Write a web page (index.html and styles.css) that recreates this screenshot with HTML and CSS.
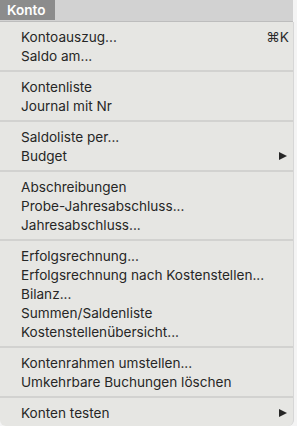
FILE: index.html
```html
<!DOCTYPE html>
<html lang="de">
<head>
    <meta charset="UTF-8">
    <meta name="viewport" content="width=device-width, initial-scale=1.0">
    <title>Konto</title>
    <link rel="stylesheet" href="styles.css">
</head>
<body>
    <div class="menubar">
        <div class="menu-title">Konto</div>
    </div>

    <div class="menu">
        <div class="item"><span>Kontoauszug...</span><span class="shortcut">&#8984;K</span></div>
        <div class="item">Saldo am...</div>
        <div class="separator"></div>

        <div class="item">Kontenliste</div>
        <div class="item">Journal mit Nr</div>
        <div class="separator"></div>

        <div class="item">Saldoliste per...</div>
        <div class="item"><span>Budget</span><span class="arrow"></span></div>
        <div class="separator"></div>

        <div class="item">Abschreibungen</div>
        <div class="item">Probe-Jahresabschluss...</div>
        <div class="item">Jahresabschluss...</div>
        <div class="separator"></div>

        <div class="item">Erfolgsrechnung...</div>
        <div class="item">Erfolgsrechnung nach Kostenstellen...</div>
        <div class="item">Bilanz...</div>
        <div class="item">Summen/Saldenliste</div>
        <div class="item">Kostenstellenübersicht...</div>
        <div class="separator"></div>

        <div class="item">Kontenrahmen umstellen...</div>
        <div class="item">Umkehrbare Buchungen löschen</div>
        <div class="separator"></div>

        <div class="item"><span>Konten testen</span><span class="arrow"></span></div>
    </div>
</body>
</html>
```

FILE: styles.css
```css
body {
    margin: 0;
    font-family: Inter, "Noto Sans", sans-serif;
    font-size: 13.6px;
    color: #262626;
    background-color: #f4f4f4;
    width: 297px;
    height: 426px;
    overflow: hidden;
}
.menubar {
    display: flex;
    height: 21px;
    width: 293px;
    background-color: #d2d2d2;
    border-bottom: 1px solid #bdbdbd;
}
.menu-title {
    width: 55px;
    height: 20px;
    background-color: #8c8c8c;
    color: #ffffff;
    font-weight: 600;
    font-size: 13.6px;
    padding-left: 7px;
    box-sizing: border-box;
    line-height: 20px;
}
.menu {
    width: 294px;
    height: 404px;
    box-sizing: border-box;
    padding-top: 5px;
    background-color: #e6e6e3;
    border-radius: 0 0 6px 6px;
    border-right: 1px solid #d6d6d6;
}
.item {
    display: flex;
    justify-content: space-between;
    align-items: center;
    height: 19px;
    padding: 0 4px 0 21px;
}
.shortcut {
    color: #2a2a2a;
}
.arrow {
    width: 0;
    height: 0;
    margin-right: 2px;
    border-top: 4.5px solid transparent;
    border-bottom: 4.5px solid transparent;
    border-left: 8px solid #262626;
}
.separator {
    height: 2px;
    margin: 5px 0;
    background-color: #d2d2d0;
}
```
